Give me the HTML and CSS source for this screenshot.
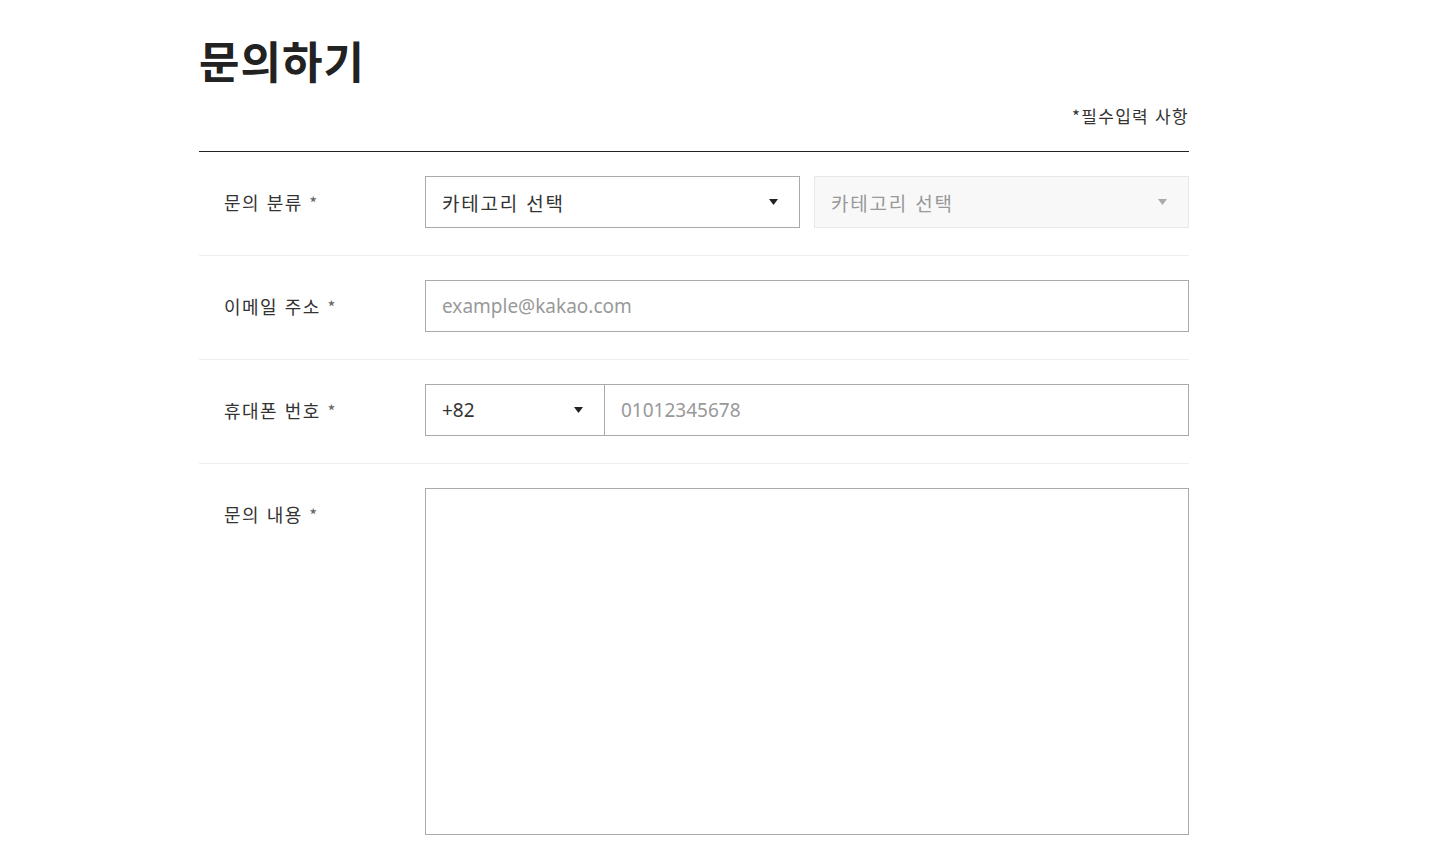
FILE: index.html
```html
<!DOCTYPE html>
<html lang="ko">
<head>
<meta charset="utf-8">
<title>문의하기</title>
<link rel="stylesheet" href="styles.css">
</head>
<body>
<div class="page">
  <h1 class="title">문의하기</h1>
  <p class="required-note">*필수입력 사항</p>
  <div class="form">
    <div class="row">
      <div class="label">문의 분류 <span class="star">*</span></div>
      <div class="field field-split">
        <div class="select">
          <span class="select-text">카테고리 선택</span>
          <svg class="caret" width="9" height="6" viewBox="0 0 9 6"><path d="M0 0H9L4.5 6Z" fill="#222"/></svg>
        </div>
        <div class="select select-disabled">
          <span class="select-text">카테고리 선택</span>
          <svg class="caret" width="9" height="6" viewBox="0 0 9 6"><path d="M0 0H9L4.5 6Z" fill="#aaa"/></svg>
        </div>
      </div>
    </div>
    <div class="row">
      <div class="label">이메일 주소 <span class="star">*</span></div>
      <div class="field">
        <input class="input" type="text" placeholder="example@kakao.com">
      </div>
    </div>
    <div class="row">
      <div class="label">휴대폰 번호 <span class="star">*</span></div>
      <div class="field field-phone">
        <div class="select select-code">
          <span class="select-text code-text">+82</span>
          <svg class="caret" width="9" height="6" viewBox="0 0 9 6"><path d="M0 0H9L4.5 6Z" fill="#222"/></svg>
        </div>
        <input class="input input-phone" type="text" placeholder="01012345678">
      </div>
    </div>
    <div class="row row-last">
      <div class="label">문의 내용 <span class="star">*</span></div>
      <div class="field">
        <textarea class="textarea"></textarea>
      </div>
    </div>
  </div>
</div>
</body>
</html>
```
FILE: styles.css
```css
* { box-sizing: border-box; }
html, body {
  margin: 0;
  padding: 0;
  background: #fff;
}
body {
  font-family: "Noto Sans", "Noto Sans CJK KR", sans-serif;
  color: #333;
}
.page {
  width: 990px;
  margin-left: 199px;
  padding-top: 30px;
}
.title {
  margin: 0;
  font-family: "Noto Sans CJK KR", sans-serif;
  font-size: 44px;
  line-height: 60px;
  font-weight: 700;
  color: #222;
  letter-spacing: 1px;
}
.required-note {
  margin: 14px 0 0;
  text-align: right;
  font-family: "Noto Sans CJK KR", sans-serif;
  font-size: 17px;
  line-height: 24px;
  letter-spacing: 1.3px;
  color: #333;
  padding-bottom: 23px;
  border-bottom: 1px solid #222;
}
.row {
  display: flex;
  padding: 24px 0 26px;
  border-bottom: 1px solid #eee;
}
.row-last {
  border-bottom: none;
  padding-bottom: 20px;
}
.label {
  width: 226px;
  flex-shrink: 0;
  padding-left: 25px;
  font-family: "Noto Sans CJK KR", sans-serif;
  font-size: 18px;
  line-height: 52px;
  letter-spacing: 1.5px;
  color: #333;
}
.star {
  color: #666;
  font-size: 17px;
  letter-spacing: 0;
}
.field {
  flex: 1;
  display: flex;
}
.field-split {
  gap: 14px;
}
.select {
  flex: 1;
  height: 52px;
  border: 1px solid #aaa;
  display: flex;
  align-items: center;
  justify-content: space-between;
  padding: 0 21px 0 16px;
  background: #fff;
}
.select-text {
  font-family: "Noto Sans CJK KR", sans-serif;
  font-size: 19px;
  letter-spacing: 1.8px;
  color: #333;
}
.select-disabled {
  background: #f8f8f8;
  border-color: #e8e8e8;
}
.select-disabled .select-text {
  color: #999;
}
.select-code {
  flex: 0 0 180px;
  padding-right: 21px;
}
.code-text {
  font-family: "Noto Sans", sans-serif;
  letter-spacing: 0;
}
.input {
  flex: 1;
  height: 52px;
  border: 1px solid #aaa;
  padding: 0 16px;
  font-family: "Noto Sans", sans-serif;
  font-size: 19px;
  color: #333;
  outline: none;
  min-width: 0;
  margin: 0;
}
.input::placeholder {
  color: #999;
}
.input-phone {
  border-left: none;
}
.textarea {
  flex: 1;
  height: 347px;
  border: 1px solid #aaa;
  resize: none;
  margin: 0;
  outline: none;
  padding: 16px;
}
```
